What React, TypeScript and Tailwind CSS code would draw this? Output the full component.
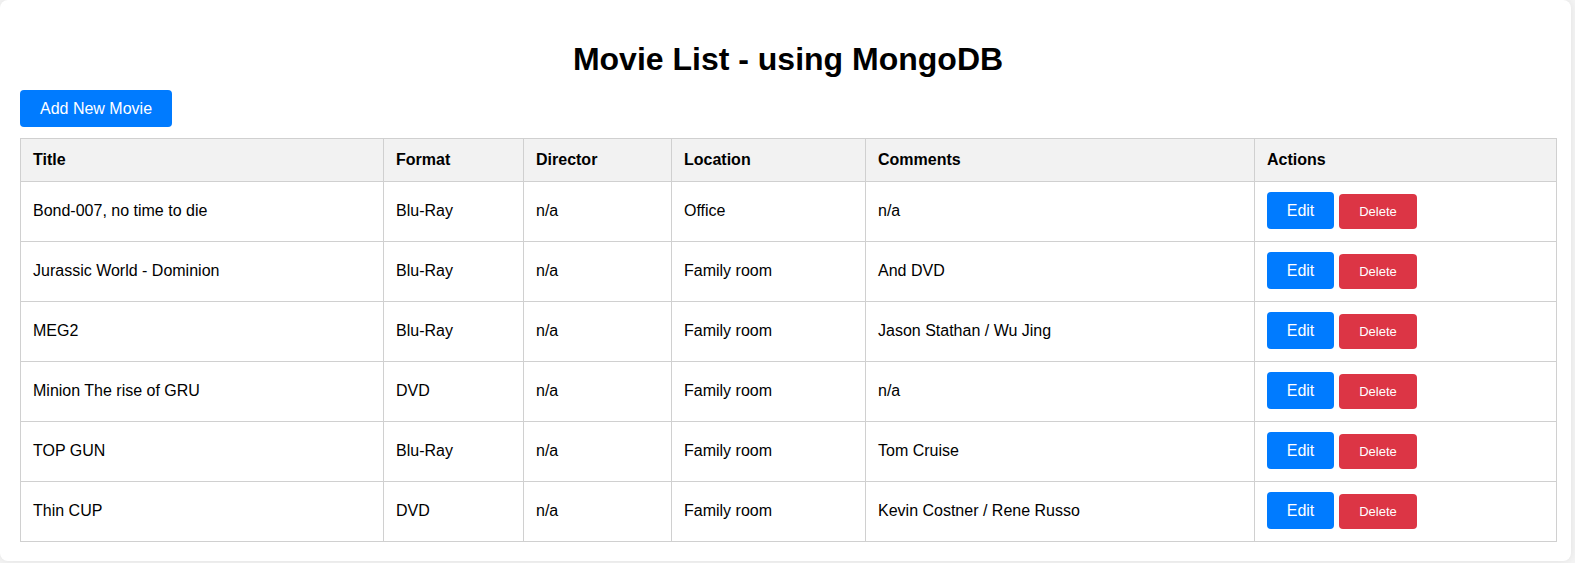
import React from 'react';

interface Movie {
  title: string;
  format: string;
  director: string;
  location: string;
  comments: string;
}

const movies: Movie[] = [
  { title: 'Bond-007, no time to die', format: 'Blu-Ray', director: 'n/a', location: 'Office', comments: 'n/a' },
  { title: 'Jurassic World - Dominion', format: 'Blu-Ray', director: 'n/a', location: 'Family room', comments: 'And DVD' },
  { title: 'MEG2', format: 'Blu-Ray', director: 'n/a', location: 'Family room', comments: 'Jason Stathan / Wu Jing' },
  { title: 'Minion The rise of GRU', format: 'DVD', director: 'n/a', location: 'Family room', comments: 'n/a' },
  { title: 'TOP GUN', format: 'Blu-Ray', director: 'n/a', location: 'Family room', comments: 'Tom Cruise' },
  { title: 'Thin CUP', format: 'DVD', director: 'n/a', location: 'Family room', comments: 'Kevin Costner / Rene Russo' },
];

const headers = [
  { label: 'Title', width: 'w-[363px]' },
  { label: 'Format', width: 'w-[140px]' },
  { label: 'Director', width: 'w-[148px]' },
  { label: 'Location', width: 'w-[194px]' },
  { label: 'Comments', width: 'w-[389px]' },
  { label: 'Actions', width: 'w-[302px]' },
];

export default function App() {
  return (
    <div className="min-h-screen bg-[#f4f4f4] font-['Liberation_Sans',Arial,sans-serif] text-black">
      <div className="w-[1571px] h-[561px] bg-white rounded-lg shadow-[0_0_8px_rgba(0,0,0,0.08)] pt-5 pl-5 pr-[15px]">
        {/* Heading */}
        <h1 className="mt-[21px] mb-3 text-center text-[32px] leading-[37px] font-bold">
          Movie List - using MongoDB
        </h1>

        <button className="h-[37px] px-5 bg-[#007bff] text-white text-base rounded-[4px]">
          Add New Movie
        </button>

        {/* Table */}
        <table className="mt-[11px] w-[1536px] table-fixed border-collapse text-base">
          <thead>
            <tr className="bg-[#f2f2f2]">
              {headers.map((h) => (
                <th
                  key={h.label}
                  className={`${h.width} border border-[#d0d0d0] px-3 py-3 text-left font-bold leading-[18px]`}
                >
                  {h.label}
                </th>
              ))}
            </tr>
          </thead>
          <tbody>
            {movies.map((m) => (
              <tr key={m.title}>
                <td className="border border-[#d0d0d0] px-3 pt-[10px] pb-[12px] align-middle">{m.title}</td>
                <td className="border border-[#d0d0d0] px-3 pt-[10px] pb-[12px] align-middle">{m.format}</td>
                <td className="border border-[#d0d0d0] px-3 pt-[10px] pb-[12px] align-middle">{m.director}</td>
                <td className="border border-[#d0d0d0] px-3 pt-[10px] pb-[12px] align-middle">{m.location}</td>
                <td className="border border-[#d0d0d0] px-3 pt-[10px] pb-[12px] align-middle">{m.comments}</td>
                <td className="border border-[#d0d0d0] px-3 pt-[10px] pb-[12px] align-middle">
                  <div className="flex items-end gap-[5px]">
                    <button className="h-[37px] w-[67px] bg-[#007bff] text-white text-base rounded-[4px]">
                      Edit
                    </button>
                    <button className="h-[35px] w-[78px] bg-[#dc3545] text-white text-[13px] rounded-[4px]">
                      Delete
                    </button>
                  </div>
                </td>
              </tr>
            ))}
          </tbody>
        </table>
      </div>
    </div>
  );
}
